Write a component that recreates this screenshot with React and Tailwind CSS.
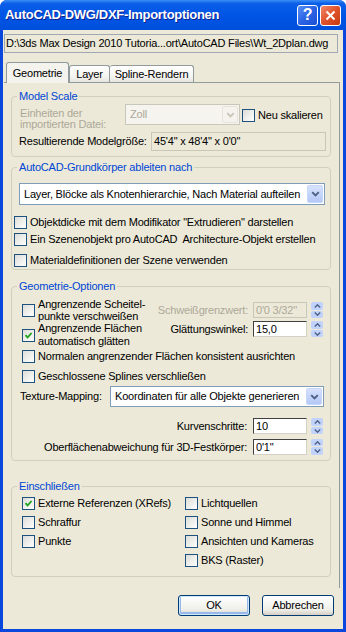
import React from "react";

const font = "font-['Liberation_Sans',Arial,sans-serif]";

function Check({ on }) {
  return (
    <span className="w-[13px] h-[13px] shrink-0 border border-[#1c5180] bg-[linear-gradient(135deg,#dcdcd7,#ffffff)] flex items-center justify-center">
      {on && (
        <svg width="9" height="9" viewBox="0 0 9 9">
          <path d="M1.5 4.2 L3.6 6.4 L7.6 2" stroke="#21a121" strokeWidth="1.8" fill="none" />
        </svg>
      )}
    </span>
  );
}

function CheckRow({ on, children, className = "" }) {
  return (
    <div className={`flex items-center h-[13px] ${className}`}>
      <Check on={on} />
      <span className="ml-[3px] whitespace-nowrap">{children}</span>
    </div>
  );
}

function ComboArrow({ disabled }) {
  return (
    <span
      className={`w-[16px] shrink-0 rounded-[2px] flex items-center justify-center border ${
        disabled
          ? "bg-[#f4f3ee] border-[#e6e4da]"
          : "bg-[linear-gradient(180deg,#d6e2fd,#b4c8f6)] border-[#c7d6fb]"
      }`}
    >
      <svg width="9" height="6" viewBox="0 0 9 6">
        <path
          d="M1.2 1.2 L4.5 4.5 L7.8 1.2"
          stroke={disabled ? "#c9c7ba" : "#4d6185"}
          strokeWidth="1.9"
          fill="none"
        />
      </svg>
    </span>
  );
}

function Combo({ text, className, disabled }) {
  return (
    <div
      className={`flex items-stretch p-[1px] border ${className} ${
        disabled ? "border-[#c9c7ba] bg-[#f5f4ee] text-[#aca899]" : "border-[#7f9db9] bg-white text-black"
      }`}
    >
      <span className="flex-1 flex items-center pl-[3px] whitespace-nowrap overflow-hidden">{text}</span>
      <ComboArrow disabled={disabled} />
    </div>
  );
}

function Spin() {
  return (
    <div className="ml-[4px] w-[12px] h-[16px] flex flex-col gap-[1px]">
      <span className="flex-1 rounded-[2px] bg-[#c1d3fb] flex items-center justify-center">
        <svg width="7" height="4" viewBox="0 0 7 4">
          <path d="M0.8 3.4 L3.5 0.8 L6.2 3.4" stroke="#4d6185" strokeWidth="1.4" fill="none" />
        </svg>
      </span>
      <span className="flex-1 rounded-[2px] bg-[#c1d3fb] flex items-center justify-center">
        <svg width="7" height="4" viewBox="0 0 7 4">
          <path d="M0.8 0.6 L3.5 3.2 L6.2 0.6" stroke="#4d6185" strokeWidth="1.4" fill="none" />
        </svg>
      </span>
    </div>
  );
}

function SpinField({ value, disabled }) {
  return (
    <div className="flex items-center">
      <div
        className={`w-[54px] h-[16px] flex items-center pl-[2px] ${
          disabled
            ? "border border-[#c9c7ba] bg-[#ece9d8] text-[#aca899]"
            : "border border-t-[#404040] border-l-[#404040] border-b-[#d4d0c8] border-r-[#d4d0c8] bg-white"
        }`}
      >
        {value}
      </div>
      <Spin />
    </div>
  );
}

function Group({ title, className = "", children }) {
  return (
    <fieldset className={`ml-[7px] w-[320px] border border-[#d0d0bf] rounded-[4px] ${className}`}>
      <legend className="ml-[5px] px-[2px] leading-[13px] text-[#0046d5]">{title}</legend>
      {children}
    </fieldset>
  );
}

function Button({ children, def }) {
  return (
    <button
      className={`w-[72px] h-[21px] rounded-[3px] border border-[#003c74] bg-[linear-gradient(180deg,#ffffff,#f0f0ea_70%,#d6d0c5)] flex items-center justify-center ${
        def ? "shadow-[inset_0_0_0_1px_#cee7ff,inset_0_-1px_0_2px_#98b8ea]" : ""
      }`}
    >
      {children}
    </button>
  );
}

export default function App() {
  return (
    <div className={`w-[346px] h-[632px] bg-[#0a47dc] rounded-t-[7px] flex flex-col text-[11px] tracking-[-0.2px] text-black ${font}`}>
      {/* TITLE BAR */}
      <div className="h-[30px] shrink-0 rounded-t-[7px] bg-[linear-gradient(180deg,#3c8ef5_0%,#0a5ee8_12%,#0055e5_50%,#004fdc_100%)] flex items-center pl-[5px] pr-[5px]">
        <span className="flex-1 text-white font-bold text-[13px] tracking-[-0.3px] [text-shadow:1px_1px_0_#0f1f8c] whitespace-nowrap">
          AutoCAD-DWG/DXF-Importoptionen
        </span>
        <div className="w-[21px] h-[21px] rounded-[3px] border border-white bg-[linear-gradient(135deg,#5a8ff5,#2c63e4_50%,#1a4fd5)] flex items-center justify-center text-white font-bold text-[16px] leading-none">
          ?
        </div>
        <div className="ml-[2px] w-[21px] h-[21px] rounded-[3px] border border-white bg-[linear-gradient(135deg,#f0876a,#e0522a_50%,#c7390f)] flex items-center justify-center">
          <svg width="11" height="11" viewBox="0 0 11 11">
            <path d="M1.5 1.5 L9.5 9.5 M9.5 1.5 L1.5 9.5" stroke="white" strokeWidth="2" />
          </svg>
        </div>
      </div>

      {/* BODY */}
      <div className="flex-1 ml-[3px] mr-[3px] mb-[3px] bg-[#ece9d8] flex flex-col">
        <div className="mt-[4px] ml-[1px] w-[334px] h-[19px] border border-[#a0a8b4] bg-[#ece9d8] flex items-center pl-[1px] whitespace-nowrap overflow-hidden">
          D:\3ds Max Design 2010 Tutoria...ort\AutoCAD Files\Wt_2Dplan.dwg
        </div>

        <div className="ml-[1px] w-[336px]">
          {/* TABS */}
          <div className="mt-[9px] h-[20px] flex items-start pl-[2px]">
            <div className="relative z-10 w-[63px] h-[21px] rounded-t-[3px] border border-b-0 border-[#919b9c] bg-[#f4f3ee] flex items-center justify-center">
              Geometrie
            </div>
            <div className="mt-[3px] w-[41px] h-[17px] rounded-t-[3px] border border-b-0 border-[#919b9c] bg-[linear-gradient(180deg,#ffffff,#f3f3ef_70%,#e4e3dc)] flex items-center justify-center">
              Layer
            </div>
            <div className="mt-[3px] w-[84px] h-[17px] rounded-t-[3px] border border-b-0 border-l-0 border-[#919b9c] bg-[linear-gradient(180deg,#ffffff,#f3f3ef_70%,#e4e3dc)] flex items-center justify-center">
              Spline-Rendern
            </div>
          </div>

          {/* PANEL */}
          <div className="h-[506px] border-t border-r border-[#919b9c] flex flex-col">
            <Group title="Model Scale" className="mt-[7px] pb-[5px]">
              <div className="flex items-start mt-[1px] pl-[8px] h-[22px]">
                <div className="w-[105px] mt-[4px] leading-[11px] text-[#aca899]">
                  Einheiten der
                  <br />
                  importierten Datei:
                </div>
                <Combo text="Zoll" disabled className="w-[115px] h-[21px]" />
                <CheckRow className="ml-[2px] mt-[5px]">Neu skalieren</CheckRow>
              </div>
              <div className="flex items-center mt-[6px] pl-[7px] h-[19px]">
                <span className="w-[132px] whitespace-nowrap">Resultierende Modelgröße:</span>
                <div className="w-[175px] h-[19px] border border-[#cbc7b8] bg-[#ece9d8] flex items-center pl-[2px]">
                  45'4" x 48'4" x 0'0"
                </div>
              </div>
            </Group>

            <Group title="AutoCAD-Grundkörper ableiten nach" className="mt-[4px] pb-[2px]">
              <Combo
                text="Layer, Blöcke als Knotenhierarchie, Nach Material aufteilen"
                className="mt-[9px] ml-[7px] w-[306px] h-[22px]"
              />
              <CheckRow className="mt-[11px] ml-[2px]">Objektdicke mit dem Modifikator "Extrudieren" darstellen</CheckRow>
              <CheckRow className="mt-[4px] ml-[2px]">Ein Szenenobjekt pro AutoCAD&nbsp; Architecture-Objekt erstellen</CheckRow>
              <CheckRow className="mt-[8px] ml-[2px]">Materialdefinitionen der Szene verwenden</CheckRow>
            </Group>

            <Group title="Geometrie-Optionen" className="mt-[10px] pb-[5px]">
              <div className="mt-[5px] h-[24px] flex items-center pl-[10px] pr-[7px]">
                <Check />
                <span className="ml-[3px] leading-[12px] whitespace-nowrap">
                  Angrenzende Scheitel-
                  <br />
                  punkte verschweißen
                </span>
                <div className="ml-auto flex items-center">
                  <span className="text-[#aca899] mr-[5px]">Schweißgrenzwert:</span>
                  <SpinField value={'0\'0 3/32"'} disabled />
                </div>
              </div>
              <div className="h-[26px] flex items-center pl-[10px] pr-[7px]">
                <Check on />
                <span className="ml-[3px] leading-[13px] whitespace-nowrap">
                  Angrenzende Flächen
                  <br />
                  automatisch glätten
                </span>
                <div className="ml-auto self-start mt-[-1px] flex items-center">
                  <span className="mr-[5px]">Glättungswinkel:</span>
                  <SpinField value="15,0" />
                </div>
              </div>
              <CheckRow className="mt-[2px] ml-[10px]">Normalen angrenzender Flächen konsistent ausrichten</CheckRow>
              <CheckRow className="mt-[7px] ml-[10px]">Geschlossene Splines verschließen</CheckRow>
              <div className="mt-[3px] flex items-center pl-[8px]">
                <span className="w-[90px]">Texture-Mapping:</span>
                <Combo text="Koordinaten für alle Objekte generieren" className="w-[214px] h-[21px]" />
              </div>
              <div className="mt-[11px] flex items-center justify-end pr-[7px]">
                <span className="mr-[6px]">Kurvenschritte:</span>
                <SpinField value="10" />
              </div>
              <div className="mt-[4px] flex items-center justify-end pr-[7px]">
                <span className="mr-[6px]">Oberflächenabweichung für 3D-Festkörper:</span>
                <SpinField value={'0\'1"'} />
              </div>
            </Group>

            <Group title="Einschließen" className="mt-[19px] pb-[9px]">
              <div className="mt-[4px] flex pl-[10px]">
                <div className="w-[163px] flex flex-col gap-[6px]">
                  <CheckRow on>Externe Referenzen (XRefs)</CheckRow>
                  <CheckRow>Schraffur</CheckRow>
                  <CheckRow>Punkte</CheckRow>
                </div>
                <div className="flex flex-col gap-[6px]">
                  <CheckRow>Lichtquellen</CheckRow>
                  <CheckRow>Sonne und Himmel</CheckRow>
                  <CheckRow>Ansichten und Kameras</CheckRow>
                  <CheckRow>BKS (Raster)</CheckRow>
                </div>
              </div>
            </Group>
          </div>
        </div>

        {/* BUTTONS */}
        <div className="mt-[7px] flex justify-end gap-[12px] pr-[9px]">
          <Button def>OK</Button>
          <Button>Abbrechen</Button>
        </div>
      </div>
    </div>
  );
}
